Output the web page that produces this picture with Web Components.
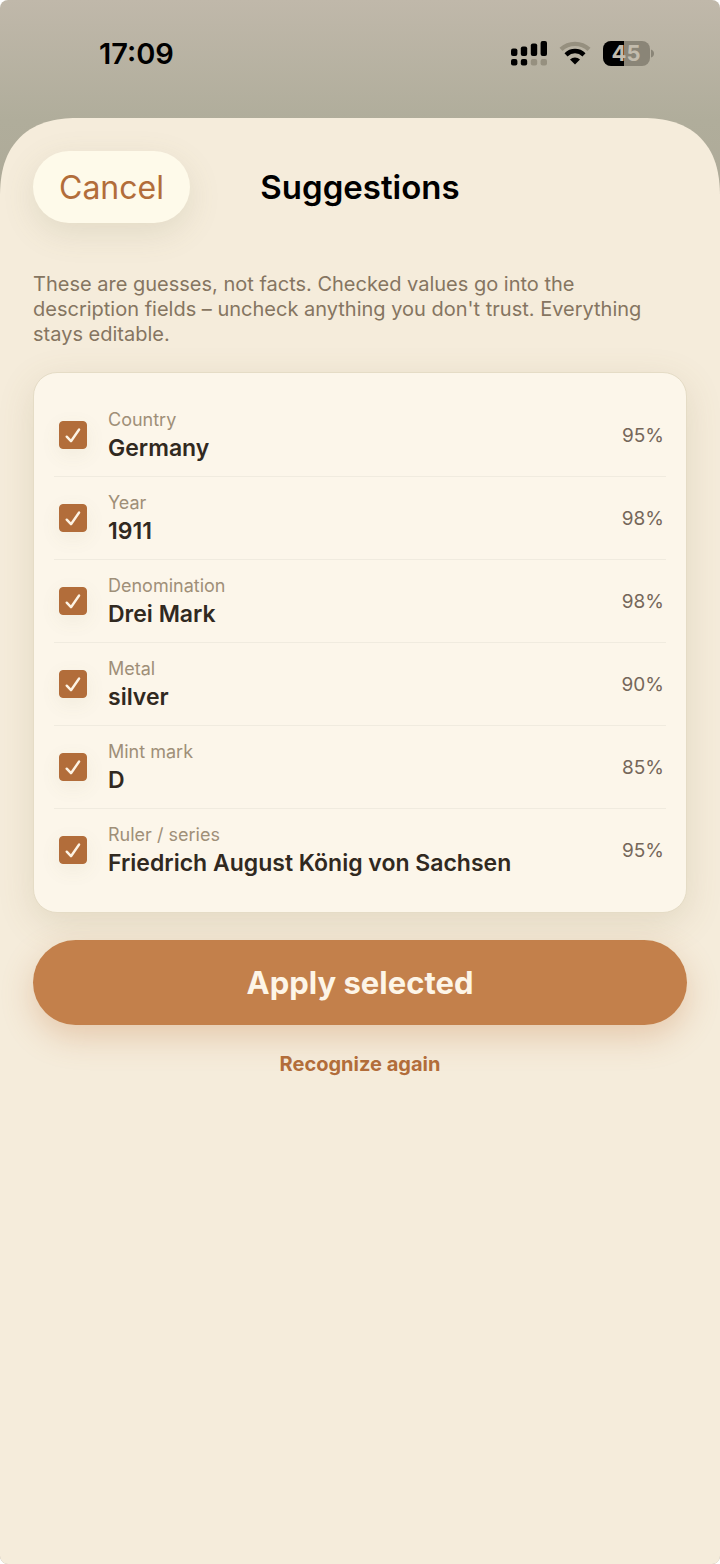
<!DOCTYPE html>
<html lang="en">
<head>
<meta charset="utf-8">
<meta name="viewport" content="width=device-width, initial-scale=1">
<title>Suggestions</title>
<style>
html, body { margin: 0; min-height: 100%; background: #fff; }
body { font-family: Inter, "Open Sans", "Liberation Sans", sans-serif; }
</style>
</head>
<body>
<phone-screen>
  <status-bar slot="status" time="17:09" battery="45"></status-bar>
  <bottom-sheet heading="Suggestions">
    <intro-text>These are guesses, not facts. Checked values go into the description fields – uncheck anything you don't trust. Everything stays editable.</intro-text>
    <suggestion-list>
      <suggestion-row label="Country" value="Germany" score="95%"></suggestion-row>
      <suggestion-row label="Year" value="1911" score="98%"></suggestion-row>
      <suggestion-row label="Denomination" value="Drei Mark" score="98%"></suggestion-row>
      <suggestion-row label="Metal" value="silver" score="90%"></suggestion-row>
      <suggestion-row label="Mint mark" value="D" score="85%"></suggestion-row>
      <suggestion-row label="Ruler / series" value="Friedrich August König von Sachsen" score="95%"></suggestion-row>
    </suggestion-list>
    <action-button kind="primary">Apply selected</action-button>
    <action-button kind="link">Recognize again</action-button>
  </bottom-sheet>
</phone-screen>

<script>
"use strict";

class BaseElement extends HTMLElement {
    constructor() {
        super();
        this.attachShadow({ mode: 'open' });
    }
    connectedCallback() {
        this.shadowRoot.innerHTML = this.render();
    }
    attr(name) {
        const value = this.getAttribute(name);
        return value !== null && value !== void 0 ? value : '';
    }
}

class PhoneScreen extends BaseElement {
    render() {
        return `
      <style>
      :host {
        display: flex;
        flex-direction: column;
        min-height: 100vh;
        border-radius: 8px;
        overflow: hidden;
        background: linear-gradient(#c0b8aa, #b0ad9b 120px, #aeaa98 200px);
      }
      </style>
      <slot name="status"></slot>
      <slot></slot>`;
    }
}
customElements.define('phone-screen', PhoneScreen);

class StatusBar extends BaseElement {
    render() {
        return `
      <style>
      :host {
        display: flex;
        justify-content: space-between;
        align-items: center;
        height: 108px;
        padding: 0 66px 10px 99px;
        color: #000;
      }
      time { font-size: 29px; line-height: 36px; font-weight: 600; }
      .icons { display: flex; align-items: center; gap: 12px; }
      svg { display: block; }
      </style>
      <time>${this.attr('time')}</time>
      <div class="icons">
        <svg width="36" height="26" viewBox="0 0 36 26" aria-hidden="true">
          <rect x="0" y="7.5" width="6.4" height="7.5" rx="2"/>
          <rect x="9.8" y="5.5" width="6.4" height="9.5" rx="2"/>
          <rect x="19.8" y="2.5" width="6.4" height="12.5" rx="2"/>
          <rect x="29.6" y="0" width="6.4" height="15" rx="2"/>
          <rect x="0" y="18" width="6.4" height="6.6" rx="2"/>
          <rect x="9.8" y="18" width="6.4" height="6.6" rx="2"/>
          <rect x="19.8" y="18" width="6.4" height="6.6" rx="2" fill="#96907f"/>
          <rect x="29.6" y="18" width="6.4" height="6.6" rx="2" fill="#96907f"/>
        </svg>
        <svg width="32" height="26" viewBox="0 0 32 26" aria-hidden="true">
          <path d="M2 8.4C9.8 1 22.2 1 30 8.4" fill="none" stroke="#96907f" stroke-width="4.4"/>
          <path d="M7 13.8C12.2 8.8 19.8 8.8 25 13.8" fill="none" stroke="#000" stroke-width="4.4"/>
          <path d="M11 18.6C13.8 15.8 18.2 15.8 21 18.6L16 23.6Z"/>
        </svg>
        <svg width="51" height="26" viewBox="0 0 51 26" role="img" aria-label="Battery">
          <clipPath id="body"><rect x="0" y="0" width="47" height="25" rx="8"/></clipPath>
          <g clip-path="url(#body)">
            <rect width="47" height="26" fill="#8a8577"/>
            <rect width="21" height="26"/>
          </g>
          <path d="M48 8.500Q51 9.500 51 12.500T48 16.500Z" fill="#8a8577"/>
          <text x="23" y="20" text-anchor="middle" font-size="22" font-weight="700" fill="#c3bcad">${this.attr('battery')}</text>
        </svg>
      </div>`;
    }
}
customElements.define('status-bar', StatusBar);

class BottomSheet extends BaseElement {
    render() {
        return `
      <style>
      :host {
        display: flex;
        flex: 1;
        flex-direction: column;
        padding: 33px;
        border-radius: 64px 64px 0 0;
        background: #f5ecdb;
      }
      @supports (corner-shape: superellipse(1.3)) {
        :host {
          border-radius: 80px 80px 0 0;
          corner-shape: superellipse(1.3);
        }
      }
      header {
        display: grid;
        grid-template-columns: 1fr auto 1fr;
        align-items: center;
        margin-bottom: 49px;
      }
      button {
        justify-self: start;
        height: 72px;
        padding: 0 26px;
        border: 0;
        border-radius: 36px;
        background: #fefaea;
        box-shadow: 0 10px 32px rgba(120, 120, 80, .15);
        color: #b26d3a;
        font: inherit;
        font-size: 32px;
      }
      h1 { margin: 0; font-size: 33px; line-height: 40px; font-weight: 600; color: #000; }
      </style>
      <header>
        <button type="button">Cancel</button>
        <h1>${this.attr('heading')}</h1>
      </header>
      <slot></slot>`;
    }
}
customElements.define('bottom-sheet', BottomSheet);

class IntroText extends BaseElement {
    render() {
        return `
      <style>
      :host { display: block; margin-bottom: 25px; padding-right: 20px; }
      p { margin: 0; font-size: 20px; line-height: 25px; color: #857561; }
      </style>
      <p><slot></slot></p>`;
    }
}
customElements.define('intro-text', IntroText);

class SuggestionList extends BaseElement {
    render() {
        return `
      <style>
      :host {
        display: block;
        margin-bottom: 27px;
        padding: 21px 20px 20px;
        border: 1px solid #e5dcc6;
        border-radius: 24px;
        background: #fcf6ea;
        box-shadow: 0 10px 36px rgba(130, 110, 60, .16);
      }
      </style>
      <slot></slot>`;
    }
}
customElements.define('suggestion-list', SuggestionList);

class SuggestionRow extends BaseElement {
    render() {
        return `
      <style>
      :host { display: block; border-bottom: 1px solid #f0ebdf; }
      :host(:last-child) { border-bottom-color: transparent; }
      label {
        display: flex;
        align-items: center;
        gap: 21px;
        padding: 12px 2px 12px 5px;
      }
      .box { display: grid; flex: none; }
      .box > * { grid-area: 1 / 1; }
      input {
        appearance: none;
        width: 28px;
        height: 28px;
        margin: 0;
        border: 1px solid #b26d3a;
        border-radius: 4px;
        box-shadow: 0 6px 20px rgba(120, 110, 80, .08);
      }
      input:checked { background: #b26d3a; }
      svg { width: 28px; height: 28px; pointer-events: none; visibility: hidden; }
      input:checked + svg { visibility: visible; }
      .text {
        display: flex;
        flex: 1;
        flex-direction: column;
        min-width: 0;
        padding-bottom: 2px;
        line-height: 28px;
      }
      .name { font-size: 18px; color: #9f8f78; }
      .value { font-size: 23px; font-weight: 600; color: #31291f; }
      output { font-size: 19px; color: #75675a; }
      </style>
      <label>
        <span class="box">
          <input type="checkbox" checked>
          <svg viewBox="0 0 28 28" fill="none" stroke="#fdf3e4" stroke-width="2.4" stroke-linecap="round" stroke-linejoin="round" aria-hidden="true">
            <path d="M7.7 15.7L12 20.2L20.1 8.5"/>
          </svg>
        </span>
        <span class="text">
          <span class="name">${this.attr('label')}</span>
          <span class="value">${this.attr('value')}</span>
        </span>
        <output>${this.attr('score')}</output>
      </label>`;
    }
}
customElements.define('suggestion-row', SuggestionRow);

class ActionButton extends BaseElement {
    render() {
        return `
      <style>
      :host { display: flex; flex-direction: column; }
      button { border: 0; background: none; font: inherit; }
      :host([kind="primary"]) button {
        height: 85px;
        border-radius: 43px;
        background: #c3804b;
        box-shadow: 0 12px 32px rgba(195, 128, 75, .32);
        color: #fdf5e7;
        font-size: 31px;
        font-weight: 700;
      }
      :host([kind="link"]) { align-items: center; margin-top: 19px; }
      :host([kind="link"]) button {
        height: 40px;
        padding: 0 16px;
        color: #b26d3a;
        font-size: 20px;
        font-weight: 700;
      }
      </style>
      <button type="button"><slot></slot></button>`;
    }
}
customElements.define('action-button', ActionButton);
</script>
</body>
</html>
